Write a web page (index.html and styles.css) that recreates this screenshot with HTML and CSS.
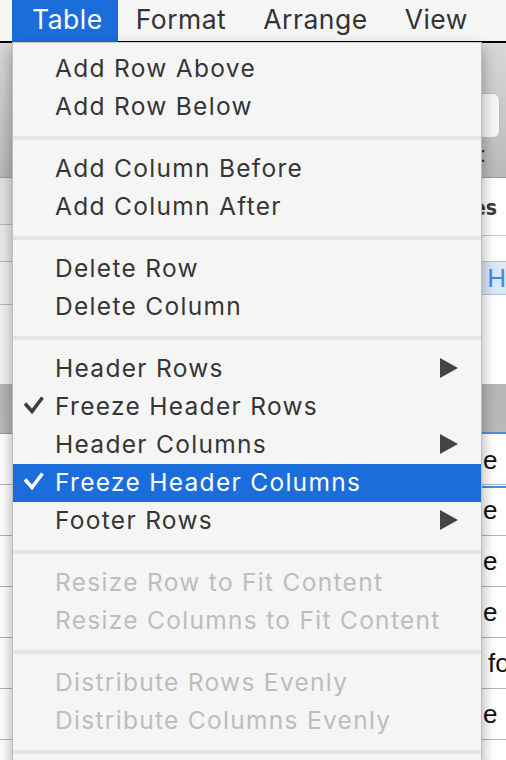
FILE: index.html
```html
<!DOCTYPE html>
<html lang="en">
<head>
<meta charset="utf-8">
<title>Table menu</title>
<link rel="stylesheet" href="styles.css">
</head>
<body>
<header class="menubar">
  <span class="mb-item active">Table</span>
  <span class="mb-item">Format</span>
  <span class="mb-item">Arrange</span>
  <span class="mb-item">View</span>
</header>

<main class="window">
  <section class="toolbar">
    <div class="tb-field"></div>
    <div class="tb-label">Style:</div>
  </section>
  <section class="panes">
    <div class="pane-left">
      <div class="pl-row r1"></div>
      <div class="pl-row r2"></div>
      <div class="pl-row r3"></div>
      <div class="pl-row r4"></div>
    </div>
    <div class="pane-right">
      <div class="pr-head">Styles</div>
      <div class="pr-body">
        <span class="chip">H</span>
      </div>
    </div>
  </section>
  <section class="table">
    <div class="thead"></div>
    <div class="trow"><div class="cell-main"></div><div class="cell-side sel">e</div></div>
    <div class="trow"><div class="cell-main"></div><div class="cell-side">e</div></div>
    <div class="trow"><div class="cell-main"></div><div class="cell-side">e</div></div>
    <div class="trow"><div class="cell-main"></div><div class="cell-side">e</div></div>
    <div class="trow"><div class="cell-main"></div><div class="cell-side indent">fo</div></div>
    <div class="trow"><div class="cell-main"></div><div class="cell-side">e</div></div>
    <div class="trow"><div class="cell-main"></div><div class="cell-side"></div></div>
  </section>
</main>

<nav class="dropdown">
  <div class="item"><span class="lbl">Add Row Above</span></div>
  <div class="item"><span class="lbl">Add Row Below</span></div>
  <div class="sep"></div>
  <div class="item"><span class="lbl">Add Column Before</span></div>
  <div class="item"><span class="lbl">Add Column After</span></div>
  <div class="sep"></div>
  <div class="item"><span class="lbl">Delete Row</span></div>
  <div class="item"><span class="lbl">Delete Column</span></div>
  <div class="sep"></div>
  <div class="item"><span class="lbl">Header Rows</span>
    <svg class="arrow" width="18" height="20" viewBox="0 0 18 20"><polygon points="0,0 18,10 0,20"/></svg></div>
  <div class="item"><svg class="check" width="24" height="22" viewBox="0 0 24 22"><polyline points="3,8.5 10,16.5 20.5,2.5"/></svg><span class="lbl">Freeze Header Rows</span></div>
  <div class="item"><span class="lbl">Header Columns</span>
    <svg class="arrow" width="18" height="20" viewBox="0 0 18 20"><polygon points="0,0 18,10 0,20"/></svg></div>
  <div class="item hl"><svg class="check" width="24" height="22" viewBox="0 0 24 22"><polyline points="3,8.5 10,16.5 20.5,2.5"/></svg><span class="lbl">Freeze Header Columns</span></div>
  <div class="item"><span class="lbl">Footer Rows</span>
    <svg class="arrow" width="18" height="20" viewBox="0 0 18 20"><polygon points="0,0 18,10 0,20"/></svg></div>
  <div class="sep"></div>
  <div class="item off"><span class="lbl">Resize Row to Fit Content</span></div>
  <div class="item off"><span class="lbl">Resize Columns to Fit Content</span></div>
  <div class="sep"></div>
  <div class="item off"><span class="lbl">Distribute Rows Evenly</span></div>
  <div class="item off"><span class="lbl">Distribute Columns Evenly</span></div>
  <div class="sep"></div>
</nav>
</body>
</html>
```

FILE: styles.css
```css
* { box-sizing: border-box; }
html, body { margin: 0; padding: 0; }
body {
  width: 506px;
  height: 760px;
  overflow: hidden;
  position: relative;
  background: #ffffff;
  font-family: "Inter", "Noto Sans", sans-serif;
  color: #363636;
}

/* ---------- menu bar ---------- */
.menubar {
  height: 43px;
  background: #f6f6f6;
  border-bottom: 2px solid #000;
  padding-left: 12px;
  display: flex;
  align-items: flex-start;
  font-size: 26.5px;
  letter-spacing: 0.5px;
}
.mb-item {
  height: 42px;
  line-height: 39px;
  padding: 0 19px 0 18px;
  color: #333;
}
.mb-item.active {
  background: #1b6ddc;
  color: #fff;
  padding-left: 20px;
  padding-right: 15px;
}

/* ---------- background window ---------- */
.window {
  font-family: "Liberation Sans", Arial, sans-serif;
  color: #111;
}
.toolbar {
  height: 135px;
  background: linear-gradient(#d8d8d8, #b9b9b9);
  border-bottom: 1px solid #9d9d9d;
  display: flex;
  flex-direction: column;
  align-items: flex-end;
  padding: 50px 6px 0 0;
}
.tb-field {
  width: 64px;
  height: 45px;
  background: #f7f7f7;
  border: 1px solid #bdbdbd;
  border-radius: 7px;
}
.tb-label {
  margin-top: 5px;
  margin-right: 14px;
  font-size: 22px;
  line-height: 24px;
  color: #333;
}
.panes {
  height: 206px;
  display: flex;
}
.pane-left {
  width: 250px;
  display: flex;
  flex-direction: column;
}
.pl-row { border-bottom: 1px solid #b8b8b8; }
.pl-row.r1 { height: 47px; background: #e3e3e3; }
.pl-row.r2 { height: 37px; background: #ebebeb; }
.pl-row.r3 { height: 43px; background: #f0f0f0; }
.pl-row.r4 { flex: 1; background: #f4f4f4; border-bottom: 0; }
.pane-right {
  flex: 1;
  display: flex;
  flex-direction: column;
  background: #fff;
}
.pr-head {
  height: 58px;
  border-bottom: 1px solid #c8c8c8;
  text-align: right;
  padding-right: 9px;
  font-family: "DejaVu Sans Condensed", "Liberation Sans", sans-serif;
  font-size: 21px;
  font-weight: bold;
  line-height: 60px;
  color: #3a3a3a;
}
.pr-body {
  flex: 1;
  padding-top: 25px;
  display: flex;
  justify-content: flex-end;
  align-items: flex-start;
}
.chip {
  width: 60px;
  height: 34px;
  background: #dce8f8;
  border: 1px solid #a9c6ee;
  border-right: 0;
  color: #3f8ce6;
  font-size: 26px;
  line-height: 32px;
  text-align: right;
  padding-right: 0;
  overflow: hidden;
  white-space: nowrap;
  direction: rtl;
}
.table { display: flex; flex-direction: column; }
.thead {
  height: 50px;
  background: linear-gradient(#b6b6b6, #b9b9b9);
  border-bottom: 1px solid #9a9a9a;
}
.trow {
  height: 51px;
  display: flex;
  border-bottom: 1px solid #b4b4b4;
}
.cell-main { flex: 1; }
.cell-side {
  width: 24px;
  padding-left: 1px;
  font-size: 26px;
  line-height: 50px;
  color: #111;
  white-space: nowrap;
}
.cell-side.indent { padding-left: 6px; }
.cell-side.sel {
  margin-top: -2px;
  height: 56px;
  border-top: 2px solid #4a8ee3;
  border-bottom: 2px solid #4a8ee3;
  line-height: 52px;
}

/* ---------- dropdown menu (overlay) ---------- */
.dropdown {
  position: absolute;
  top: 42px;
  left: 12px;
  width: 470px;
  height: 740px;
  background: #f5f5f5;
  border: 1px solid rgba(0, 0, 0, 0.22);
  border-top-color: #c8c8c8;
  box-shadow: 0 6px 14px rgba(0, 0, 0, 0.35);
  padding-top: 7px;
  font-size: 24.5px;
  letter-spacing: 1.3px;
}
.item {
  height: 38px;
  display: grid;
  grid-template-columns: 42px 1fr auto;
  align-items: center;
  padding-right: 23px;
  padding-bottom: 2px;
  color: #363636;
  line-height: 36px;
}
.item .lbl { grid-column: 2; white-space: nowrap; }
.item .check {
  grid-column: 1;
  grid-row: 1;
  margin-left: 9px;
  fill: none;
  stroke: #3d3d3d;
  stroke-width: 3.6;
  stroke-linecap: butt;
  stroke-linejoin: miter;
}
.item .arrow { grid-column: 3; fill: #454545; display: block; }
.item.hl { background: #1b6ddc; color: #fff; }
.item.hl .check { stroke: #fff; }
.item.off { color: #bdbdbd; }
.sep {
  height: 4px;
  margin: 10px 0;
  background: #e4e4e4;
}
```
